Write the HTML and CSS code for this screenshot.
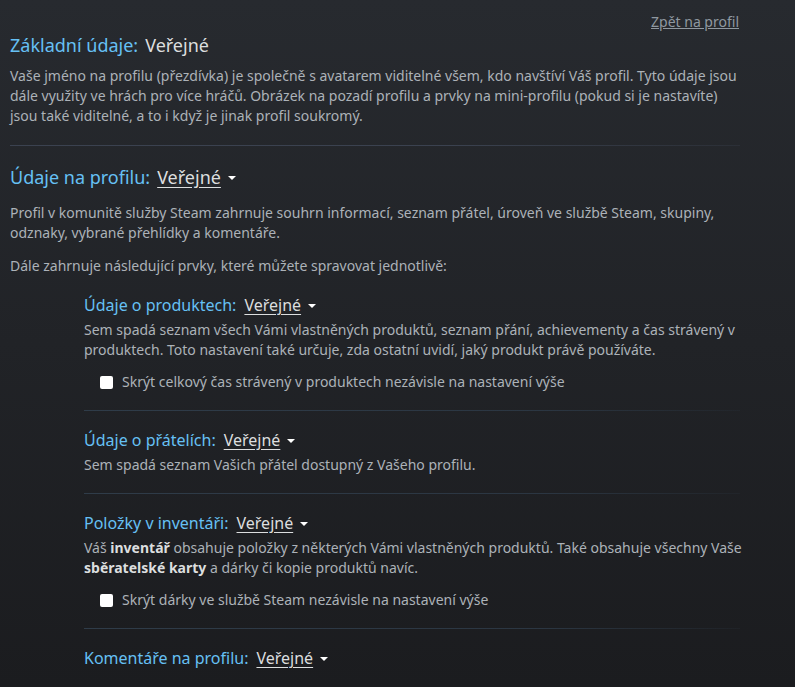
FILE: index.html
```html
<!DOCTYPE html>
<html lang="cs">
<head>
<meta charset="utf-8">
<link rel="stylesheet" href="styles.css">
</head>
<body>
<div class="page">
  <div class="back-row"><a class="back" href="#">Zpět na profil</a></div>

  <div class="main-section">
    <div class="title">Základní údaje:<span class="val plain">Veřejné</span></div>
    <p class="desc first">Vaše jméno na profilu (přezdívka) je společně s avatarem viditelné všem, kdo navštíví Váš profil. Tyto údaje jsou dále využity ve hrách pro více hráčů. Obrázek na pozadí profilu a prvky na mini-profilu (pokud si je nastavíte) jsou také viditelné, a to i když je jinak profil soukromý.</p>
  </div>

  <div class="sep"></div>

  <div class="main-section second">
    <div class="title">Údaje na profilu:<span class="val drop">Veřejné</span><span class="arrow"></span></div>
    <p class="desc mid">Profil v komunitě služby Steam zahrnuje souhrn informací, seznam přátel, úroveň ve službě Steam, skupiny, odznaky, vybrané přehlídky a komentáře.</p>
    <p class="desc next">Dále zahrnuje následující prvky, které můžete spravovat jednotlivě:</p>
  </div>

  <div class="subs">
    <div class="sub">
      <div class="sub-title">Údaje o produktech:<span class="val drop">Veřejné</span><span class="arrow"></span></div>
      <p class="sub-desc">Sem spadá seznam všech Vámi vlastněných produktů, seznam přání, achievementy a čas strávený v produktech. Toto nastavení také určuje, zda ostatní uvidí, jaký produkt právě používáte.</p>
      <label class="check"><span class="box"></span>Skrýt celkový čas strávený v produktech nezávisle na nastavení výše</label>
    </div>
    <div class="sub">
      <div class="sub-title">Údaje o přátelích:<span class="val drop">Veřejné</span><span class="arrow"></span></div>
      <p class="sub-desc">Sem spadá seznam Vašich přátel dostupný z Vašeho profilu.</p>
    </div>
    <div class="sub">
      <div class="sub-title">Položky v inventáři:<span class="val drop">Veřejné</span><span class="arrow"></span></div>
      <p class="sub-desc">Váš <b>inventář</b> obsahuje položky z některých Vámi vlastněných produktů. Také obsahuje všechny Vaše <b>sběratelské karty</b> a dárky či kopie produktů navíc.</p>
      <label class="check"><span class="box"></span>Skrýt dárky ve službě Steam nezávisle na nastavení výše</label>
    </div>
    <div class="sub last">
      <div class="sub-title">Komentáře na profilu:<span class="val drop">Veřejné</span><span class="arrow"></span></div>
    </div>
  </div>
</div>
</body>
</html>
```

FILE: styles.css
```css
html, body {
  margin: 0;
  padding: 0;
}
body {
  min-height: 687px;
  background: linear-gradient(to bottom, #272a2f 0%, #1b1c1f 100%);
  font-family: "Noto Sans", "Liberation Sans", Arial, sans-serif;
  color: #acb2b8;
  font-size: 14px;
}
.page {
  width: 736px;
  padding-left: 10px;
  padding-top: 12px;
}
.back-row {
  display: flex;
  justify-content: flex-end;
  line-height: 20px;
  margin-bottom: 1px;
  padding-right: 7px;
}
.back {
  color: #8f98a0;
  text-decoration: underline;
  font-size: 14px;
}
.title {
  font-size: 18px;
  line-height: 24px;
  color: #66c0f4;
  display: flex;
  align-items: center;
}
.val {
  color: #dcdedf;
  margin-left: 7px;
}
.val.drop {
  text-decoration: underline;
  text-underline-offset: 3px;
}
.arrow {
  display: inline-block;
  width: 0;
  height: 0;
  border-left: 4px solid transparent;
  border-right: 4px solid transparent;
  border-top: 4px solid #ffffff;
  margin-left: 7px;
  margin-top: 2px;
}
.desc {
  margin: 0;
  line-height: 20px;
}
.desc.first {
  margin-top: 9px;
}
.desc.mid {
  margin-top: 14px;
}
.desc.next {
  margin-top: 13px;
}
.sep {
  height: 1px;
  width: 730px;
  margin: 19px 0;
  background: linear-gradient(to right, #3b4250 0%, #3b4250 60%, rgba(59, 66, 80, 0.3) 100%);
}
.subs {
  margin-left: 74px;
  margin-top: 18px;
}
.sub {
  padding: 18px 0 18px 0;
  width: 656px;
  border-bottom: 1px solid transparent;
  border-image: linear-gradient(to right, #2f3c49 0%, #2b3642 70%, rgba(43, 54, 66, 0.2) 100%) 1;
}
.sub:first-child {
  padding-top: 0;
}
.sub.last {
  border-bottom: none;
  border-image: none;
}
.sub-title {
  font-size: 16px;
  line-height: 22px;
  color: #66c0f4;
  display: flex;
  align-items: center;
}
.sub-title .val {
  margin-left: 8px;
}
.sub-desc {
  margin: 4px -6px 0 0;
  line-height: 20px;
}
.sub-desc b {
  color: #dcdedf;
  font-weight: bold;
}
.check {
  display: flex;
  align-items: center;
  margin-top: 12px;
  margin-left: 16px;
  line-height: 20px;
}
.box {
  width: 13px;
  height: 13px;
  background: #ffffff;
  border-radius: 2px;
  margin-right: 9px;
  flex: none;
}
```
